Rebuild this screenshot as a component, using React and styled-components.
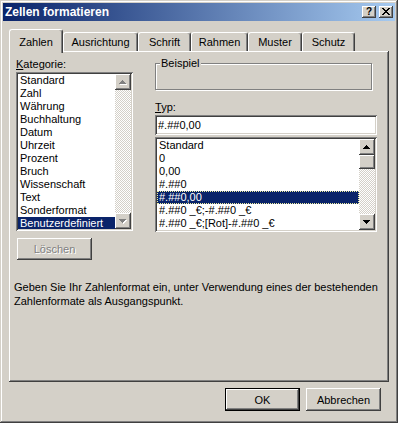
import React from 'react';
import styled, { createGlobalStyle, css } from 'styled-components';

const FACE = '#d4d0c8';
const SHADOW = '#808080';
const DARK = '#404040';
const NAVY = '#0a246a';

const raised = css`
  box-shadow: inset -1px -1px ${DARK}, inset 1px 1px #fff,
    inset -2px -2px ${SHADOW}, inset 2px 2px ${FACE};
`;

const sunken = css`
  box-shadow: inset 1px 1px ${SHADOW}, inset -1px -1px #fff,
    inset 2px 2px ${DARK}, inset -2px -2px ${FACE};
`;

const GlobalStyle = createGlobalStyle`
  html, body {
    margin: 0;
    padding: 0;
    background: ${FACE};
  }

  body {
    font-family: "Liberation Sans", Arial, sans-serif;
    font-size: 11px;
    color: #000;
  }
`;

const Window = styled.div`
  width: 398px;
  height: 423px;
  box-sizing: border-box;
  padding: 3px;
  background: ${FACE};
  box-shadow: inset -1px -1px ${DARK}, inset 1px 1px ${FACE},
    inset -2px -2px ${SHADOW}, inset 2px 2px #fff;
  display: flex;
  flex-direction: column;
`;

const TitleBar = styled.div`
  height: 18px;
  display: flex;
  align-items: center;
  justify-content: space-between;
  padding: 0 2px 0 2px;
  background: linear-gradient(to right, ${NAVY}, #a6caf0);
`;

const Title = styled.span`
  color: #fff;
  font-weight: bold;
  font-size: 12px;
  line-height: 18px;
`;

const CaptionButtons = styled.div`
  display: flex;
  gap: 3px;
`;

const CaptionButton = styled.div`
  width: 14px;
  height: 12px;
  box-sizing: border-box;
  background: ${FACE};
  ${raised};
  display: flex;
  align-items: center;
  justify-content: center;
  font-weight: bold;
  font-size: 10px;
  line-height: 10px;
  padding-bottom: 1px;
`;

const Body = styled.div`
  flex: 1;
  padding: 8px 6px 0;
  display: flex;
  flex-direction: column;
`;

const TabStrip = styled.div`
  display: flex;
  align-items: flex-end;
  height: 22px;
`;

const Tab = styled.div`
  position: relative;
  width: ${(p) => p.$w}px;
  height: ${(p) => (p.$active ? 24 : 19)}px;
  margin-bottom: ${(p) => (p.$active ? -2 : 0)}px;
  padding-top: ${(p) => (p.$active ? 6 : 3)}px;
  z-index: ${(p) => (p.$active ? 1 : 0)};
  box-sizing: border-box;
  text-align: center;
  line-height: 13px;
  background: ${FACE};
  border-top: 1px solid #fff;
  border-left: 1px solid #fff;
  border-right: 1px solid ${DARK};
  border-radius: 3px 3px 0 0;
  box-shadow: inset -1px 0 ${SHADOW};
`;

const Panel = styled.div`
  height: 331px;
  box-sizing: border-box;
  padding: 7px 12px 0 5px;
  box-shadow: inset -1px -1px ${DARK}, inset 1px 1px #fff,
    inset -2px -2px ${SHADOW};
`;

const TopGrid = styled.div`
  display: grid;
  grid-template-columns: 117px 222px;
  column-gap: 22px;
  margin-left: 2px;
  align-items: start;
`;

const Column = styled.div`
  display: flex;
  flex-direction: column;
`;

const Label = styled.div`
  line-height: 13px;
  height: 13px;
  margin-top: ${(p) => p.$top || 0}px;
  margin-bottom: 1px;
`;

const Group = styled.div`
  position: relative;
  width: 217px;
  height: 27px;
  margin-top: 5px;
  box-sizing: border-box;
  border: 1px solid ${SHADOW};
  box-shadow: 1px 1px #fff, inset 1px 1px #fff;
`;

const Legend = styled.span`
  position: absolute;
  top: -7px;
  left: 4px;
  padding: 0 1px;
  line-height: 13px;
  background: ${FACE};
`;

const TextField = styled.div`
  height: 20px;
  box-sizing: border-box;
  padding: 2px 3px;
  line-height: 16px;
  background: #fff;
  ${sunken};
`;

const ListFrame = styled.div`
  height: ${(p) => p.$h}px;
  margin-top: ${(p) => p.$top || 0}px;
  box-sizing: border-box;
  padding: 2px;
  background: #fff;
  ${sunken};
  display: flex;
`;

const Items = styled.div`
  flex: 1;
  overflow: hidden;
`;

const Item = styled.div`
  height: 13px;
  line-height: 13px;
  padding-left: 2px;
  white-space: nowrap;
  ${(p) => p.$selected && css`
    background: ${NAVY};
    color: #fff;
  `}
  ${(p) => p.$focus && css`
    outline: 1px dotted #f0f0a0;
    outline-offset: -1px;
  `}
`;

const ScrollBar = styled.div`
  width: 16px;
  display: flex;
  flex-direction: column;
`;

const ScrollButton = styled.div`
  width: 16px;
  height: ${(p) => p.$h || 16}px;
  box-sizing: border-box;
  background: ${FACE};
  ${raised};
  display: flex;
  align-items: center;
  justify-content: center;
`;

const Track = styled.div`
  flex: 1;
  background-color: #fff;
  background-image: conic-gradient(${FACE} 0 25%, #fff 0 50%, ${FACE} 0 75%, #fff 0);
  background-size: 2px 2px;
`;

const Button = styled.div`
  width: 75px;
  height: ${(p) => p.$h || 23}px;
  margin-top: ${(p) => p.$top || 0}px;
  margin-left: ${(p) => p.$left || 0}px;
  box-sizing: border-box;
  background: ${FACE};
  display: flex;
  align-items: center;
  justify-content: center;
  ${raised};
  ${(p) => p.$default && css`
    border: 1px solid #000;
  `}
  ${(p) => p.$disabled && css`
    color: ${SHADOW};
    text-shadow: 1px 1px #fff;
  `}
`;

const Description = styled.div`
  margin-top: 20px;
  line-height: 14px;
  white-space: nowrap;
`;

const ButtonRow = styled.div`
  display: flex;
  justify-content: flex-end;
  gap: 6px;
  margin-top: 6px;
  padding-right: 8px;
`;

const Arrow = ({ dir, disabled }) => {
  const rows = [0, 1, 2, 3].map((i) => ({
    y: dir === 'up' ? i : 3 - i,
    x: 3 - i,
    w: 2 * i + 1,
  }));
  return (
    <svg width="8" height="5" viewBox="0 0 8 5" shapeRendering="crispEdges">
      {disabled && rows.map((r) => (
        <rect key={`s${r.y}`} x={r.x + 1} y={r.y + 1} width={r.w} height="1" fill="#fff" />
      ))}
      {rows.map((r) => (
        <rect key={r.y} x={r.x} y={r.y} width={r.w} height="1" fill={disabled ? SHADOW : '#000'} />
      ))}
    </svg>
  );
};

const CloseGlyph = () => (
  <svg width="8" height="7" viewBox="0 0 8 7" shapeRendering="crispEdges">
    <path d="M0 0h2v1H0zM6 0h2v1H6zM1 1h2v1H1zM5 1h2v1H5zM2 2h4v1H2zM3 3h2v1H3zM2 4h4v1H2zM1 5h2v1H1zM5 5h2v1H5zM0 6h2v1H0zM6 6h2v1H6z" fill="#000" />
  </svg>
);

const ListBox = ({ items, selected, focus, height, top, thumb, disabled }) => (
  <ListFrame $h={height} $top={top}>
    <Items>
      {items.map((it, i) => (
        <Item key={it} $selected={i === selected} $focus={focus && i === selected}>
          {it}
        </Item>
      ))}
    </Items>
    <ScrollBar>
      <ScrollButton><Arrow dir="up" disabled={disabled} /></ScrollButton>
      {thumb && <ScrollButton $h={thumb} />}
      <Track />
      <ScrollButton><Arrow dir="down" disabled={disabled} /></ScrollButton>
    </ScrollBar>
  </ListFrame>
);

const tabs = [
  ['Zahlen', 54],
  ['Ausrichtung', 75],
  ['Schrift', 53],
  ['Rahmen', 57],
  ['Muster', 54],
  ['Schutz', 53],
];

const categories = [
  'Standard', 'Zahl', 'Währung', 'Buchhaltung', 'Datum', 'Uhrzeit',
  'Prozent', 'Bruch', 'Wissenschaft', 'Text', 'Sonderformat', 'Benutzerdefiniert',
];

const formats = [
  'Standard',
  '0',
  '0,00',
  '#.##0',
  '#.##0,00',
  '#.##0 _€;-#.##0 _€',
  '#.##0 _€;[Rot]-#.##0 _€',
];

const App = () => (
  <>
    <GlobalStyle />
    <Window>
      <TitleBar>
        <Title>Zellen formatieren</Title>
        <CaptionButtons>
          <CaptionButton>?</CaptionButton>
          <CaptionButton><CloseGlyph /></CaptionButton>
        </CaptionButtons>
      </TitleBar>
      <Body>
        <TabStrip>
          {tabs.map(([name, w], i) => (
            <Tab key={name} $w={w} $active={i === 0}>{name}</Tab>
          ))}
        </TabStrip>
        <Panel>
          <TopGrid>
            <Column>
              <Label><u>K</u>ategorie:</Label>
              <ListBox items={categories} selected={11} height={159} disabled />
              <Button $disabled $h={22} $top={7} $left={1}>Löschen</Button>
            </Column>
            <Column>
              <Group>
                <Legend>Beispiel</Legend>
              </Group>
              <Label $top={11}><u>T</u>yp:</Label>
              <TextField>#.##0,00</TextField>
              <ListBox items={formats} selected={4} focus height={95} top={2} thumb={14} />
            </Column>
          </TopGrid>
          <Description>
            Geben Sie Ihr Zahlenformat ein, unter Verwendung eines der bestehenden
            <br />
            Zahlenformate als Ausgangspunkt.
          </Description>
        </Panel>
        <ButtonRow>
          <Button $default>OK</Button>
          <Button>Abbrechen</Button>
        </ButtonRow>
      </Body>
    </Window>
  </>
);

export default App;
